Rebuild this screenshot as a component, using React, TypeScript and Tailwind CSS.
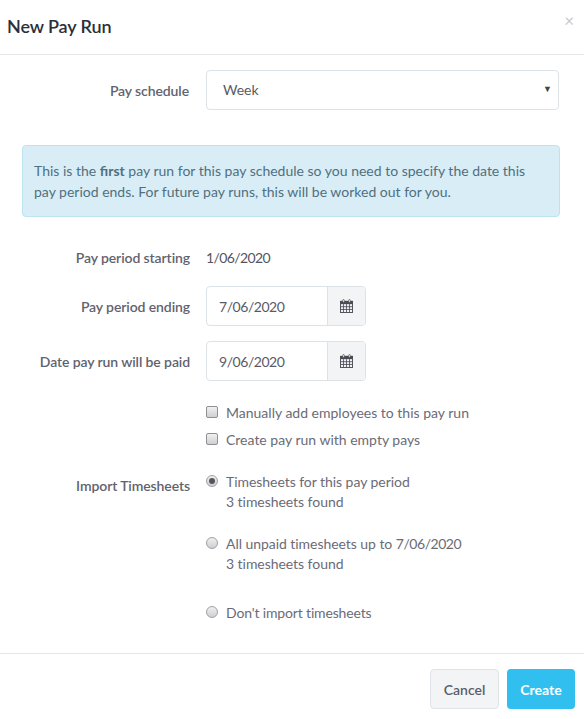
const font = "font-['Lato','Open_Sans',sans-serif]";

function CalendarIcon() {
  return (
    <svg width="13" height="14" viewBox="0 0 14 15" className="block">
      <rect x="0.5" y="2.5" width="13" height="12" fill="none" stroke="#4a4a55" strokeWidth="1" />
      <rect x="0.5" y="2" width="13" height="3.5" fill="#4a4a55" />
      <path d="M0.5 8.25H13.5M0.5 11.25H13.5M3.75 5.5V14.5M7 5.5V14.5M10.25 5.5V14.5" stroke="#4a4a55" strokeWidth="0.9" fill="none" />
      <rect x="3" y="0.5" width="1.6" height="3.2" rx="0.7" fill="#fff" stroke="#4a4a55" strokeWidth="0.7" />
      <rect x="9.4" y="0.5" width="1.6" height="3.2" rx="0.7" fill="#fff" stroke="#4a4a55" strokeWidth="0.7" />
    </svg>
  );
}

function Label({ children, className = "" }: { children: React.ReactNode; className?: string }) {
  return (
    <div className={`w-[190px] shrink-0 text-right font-semibold text-[#62626e] text-[14px] leading-5 tracking-[-0.1px] ${className}`}>
      {children}
    </div>
  );
}

function DateField({ label, value }: { label: string; value: string }) {
  return (
    <div className="flex items-center">
      <Label className="pt-[2px]">{label}</Label>
      <div className="ml-4 flex h-10 w-[160px] rounded border border-[#dde2e7] overflow-hidden">
        <div className="w-[120px] pl-3 flex items-center text-[14px] text-[#5a5a66] tracking-[-0.45px]">{value}</div>
        <div className="flex-1 bg-[#f3f4f6] border-l border-[#dde2e7] flex items-center justify-center">
          <CalendarIcon />
        </div>
      </div>
    </div>
  );
}

function Check({ label }: { label: string }) {
  return (
    <div className="flex items-start h-5">
      <span className="mt-[3px] block w-3 h-3 rounded-[2px] border border-[#8f8f96] bg-gradient-to-b from-[#f0f0f0] to-[#cfcfd2]" />
      <span className="ml-2 text-[14px] leading-5 text-[#6b6b76]">{label}</span>
    </div>
  );
}

function Radio({ label, sub, checked }: { label: React.ReactNode; sub?: string; checked?: boolean }) {
  return (
    <div className="flex items-start">
      <span className="mt-[3px] flex items-center justify-center w-3 h-3 rounded-full border border-[#a0a0a6] bg-gradient-to-b from-[#f0f0f0] to-[#cfcfd2]">
        {checked && <span className="block w-[6px] h-[6px] rounded-full bg-[#55555c]" />}
      </span>
      <div className="ml-2 text-[14px] leading-5 text-[#6b6b76] tracking-[-0.05px]">
        <div>{label}</div>
        {sub && <div>{sub}</div>}
      </div>
    </div>
  );
}

export default function App() {
  return (
    <div className={`w-[584px] h-[719px] bg-white overflow-hidden flex flex-col ${font}`}>
      <header className="h-[55px] shrink-0 border-b border-[#e4e6e9] flex items-start justify-between pl-[7px] pr-[10px]">
        <h1 className="mt-[14px] text-[18px] leading-6 font-semibold tracking-[-0.1px] text-[#2b2f38]">New Pay Run</h1>
        <span className="mt-[11px] text-[17px] leading-5 text-[#c9c9c9]">×</span>
      </header>

      <main className="flex-1 pt-[15px]">
        <div className="flex items-center">
          <Label className="pt-[2px] pr-[1px]">Pay schedule</Label>
          <div className="ml-4 w-[353px] h-10 rounded border border-[#dde2e7] flex items-center justify-between pl-4 pr-[6px]">
            <span className="text-[14px] text-[#5a5a66] -mt-[1px]">Week</span>
            <span className="text-[9px] text-[#444] -mt-[2px]">▼</span>
          </div>
        </div>

        <div className="mt-[35px] ml-[22px] w-[538px] h-[72px] rounded border border-[#bce3f0] bg-[#d9edf6] px-[11px] pt-[15px] text-[14px] leading-[20.5px] text-[#50707f]">
          This is the <b className="font-bold">first</b> pay run for this pay schedule so you need to specify the date this pay period ends. For future pay runs, this will be worked out for you.
        </div>

        <div className="mt-[31px] flex items-center">
          <Label>Pay period starting</Label>
          <div className="ml-4 text-[14px] leading-5 text-[#55555f] tracking-[-0.6px]">1/06/2020</div>
        </div>

        <div className="mt-[18px] flex flex-col gap-[15px]">
          <DateField label="Pay period ending" value="7/06/2020" />
          <DateField label="Date pay run will be paid" value="9/06/2020" />
        </div>

        <div className="mt-[22px] ml-[206px] flex flex-col gap-[7px]">
          <Check label="Manually add employees to this pay run" />
          <Check label="Create pay run with empty pays" />
        </div>

        <div className="mt-[22px] flex items-start">
          <Label className="mt-[4px]">Import Timesheets</Label>
          <div className="ml-4 flex flex-col">
            <Radio checked label="Timesheets for this pay period" sub="3 timesheets found" />
            <div className="mt-[22px]">
              <Radio label={<>All unpaid timesheets up to <span className="tracking-[-0.45px]">7/06/2020</span></>} sub="3 timesheets found" />
            </div>
            <div className="mt-[29px]"><Radio label={<span className="tracking-[-0.15px]">Don't import timesheets</span>} /></div>
          </div>
        </div>
      </main>

      <footer className="h-[66px] shrink-0 border-t border-[#e4e6e9] flex items-start justify-end gap-2 pt-[15px] pr-[9px]">
        <button className="w-[69px] h-10 rounded border border-[#e0e3e7] bg-[#f3f4f6] text-[14px] font-semibold text-[#5c5c68]">Cancel</button>
        <button className="w-[68px] h-10 rounded bg-[#31bff0] text-[14px] font-bold text-white">Create</button>
      </footer>
    </div>
  );
}
